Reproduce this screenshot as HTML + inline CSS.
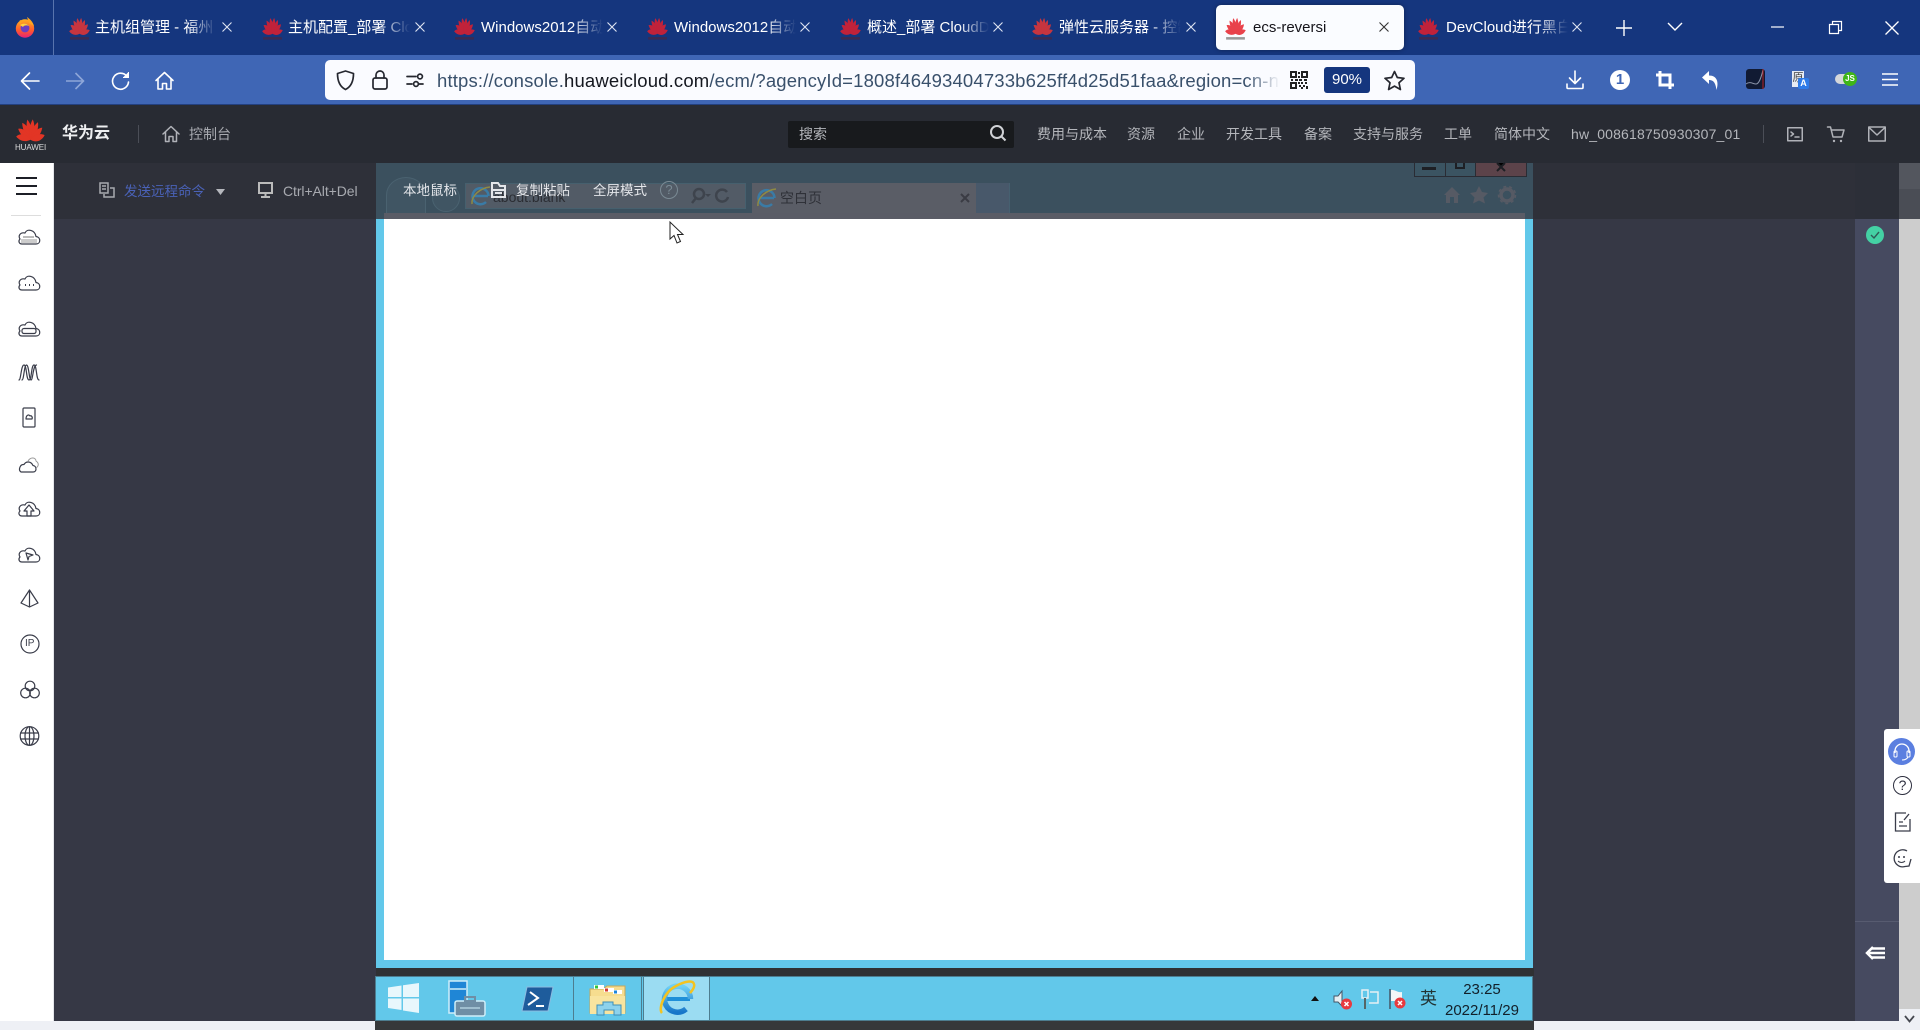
<!DOCTYPE html>
<html lang="zh"><head><meta charset="utf-8"><title>ecs-reversi</title>
<style>
*{box-sizing:border-box}
html,body{margin:0;padding:0;width:1920px;height:1030px;overflow:hidden;background:#eef0f5}
body{position:relative;font-family:"Liberation Sans","Noto Sans CJK SC",sans-serif}
.a{position:absolute}
.t{position:absolute;white-space:nowrap;line-height:1}
.tab{position:absolute;top:18px;color:#fff;font-size:15px;line-height:20px;white-space:nowrap;overflow:hidden;width:122px;-webkit-mask-image:linear-gradient(90deg,#000 75%,transparent 100%);mask-image:linear-gradient(90deg,#000 75%,transparent 100%)}
.nav{top:127px;font-size:14px;color:#b4b6bb}
svg{position:absolute;overflow:visible}
.wh{fill:none;stroke:#fff;stroke-width:1.6;stroke-linecap:round;stroke-linejoin:round}
.x{fill:none;stroke:#dfe5f2;stroke-width:1.1}
.gr{fill:none;stroke:#b0b2b8;stroke-width:1.5;stroke-linejoin:round;stroke-linecap:round}
.si{fill:none;stroke:#3a3d4a;stroke-width:1.2;stroke-linejoin:round;stroke-linecap:round}
.dk{fill:none;stroke:#25272f;stroke-width:1.7;stroke-linecap:round;stroke-linejoin:round}
</style></head><body>
<svg width="0" height="0" style="position:absolute"><defs>
<path id="p" d="M16 21C12.200 15 11.800 8 15 2C20 7 20 15 16 21Z"/>
<g id="hw">
<use href="#p" transform="rotate(-10 16 21)"/><use href="#p" transform="rotate(-32 16 21)"/><use href="#p" transform="rotate(-55 16 21)"/><use href="#p" transform="rotate(-78 16 21)"/>
<use href="#p" transform="rotate(12 16 21)"/><use href="#p" transform="rotate(34 16 21)"/><use href="#p" transform="rotate(57 16 21)"/><use href="#p" transform="rotate(80 16 21)"/>
</g>
<linearGradient id="ff" x1="0" y1="0" x2="0" y2="1"><stop offset="0" stop-color="#ffb020"/><stop offset=".6" stop-color="#ff5a2c"/><stop offset="1" stop-color="#e6207a"/></linearGradient>
<linearGradient id="ie" x1="0" y1="0" x2="0" y2="1"><stop offset="0" stop-color="#6fd0f5"/><stop offset="1" stop-color="#1776c9"/></linearGradient>
</defs></svg>

<!-- tab strip -->
<div class="a" style="left:0;top:0;width:1920px;height:55px;background:#15367e"></div>
<div class="a" style="left:53px;top:0;width:1px;height:55px;background:#5874ad"></div>
<svg style="left:14px;top:16px" width="22" height="22" viewBox="0 0 22 22"><circle cx="11" cy="12.500" r="9.200" fill="url(#ff)"/><path d="M6 4c-1 2-1 3 0 4l3-3zM13 1c3 2 6 5 7 9l-5-3z" fill="#ffa51f"/><circle cx="11" cy="12" r="4.400" fill="#6b3fc0"/><path d="M6 9c3-2 7-2 9 1-2-1-5-1-6 1z" fill="#ffd23a"/></svg>

<svg style="left:69px;top:16px" width="21" height="27" viewBox="-3 0 38 32" preserveAspectRatio="none" fill="#c7353f"><use href="#hw"/><rect x="-1" y="25" width="34" height="3" fill="#3b2a52"/></svg>
<svg style="left:262px;top:16px" width="21" height="27" viewBox="-3 0 38 32" preserveAspectRatio="none" fill="#c1223a"><use href="#hw"/><rect x="-1" y="25" width="34" height="3" fill="#3b2a52"/></svg>
<svg style="left:454px;top:16px" width="21" height="27" viewBox="-3 0 38 32" preserveAspectRatio="none" fill="#c1223a"><use href="#hw"/><rect x="-1" y="25" width="34" height="3" fill="#3b2a52"/></svg>
<svg style="left:647px;top:16px" width="21" height="27" viewBox="-3 0 38 32" preserveAspectRatio="none" fill="#c1223a"><use href="#hw"/><rect x="-1" y="25" width="34" height="3" fill="#3b2a52"/></svg>
<svg style="left:840px;top:16px" width="21" height="27" viewBox="-3 0 38 32" preserveAspectRatio="none" fill="#c1223a"><use href="#hw"/><rect x="-1" y="25" width="34" height="3" fill="#3b2a52"/></svg>
<svg style="left:1032px;top:16px" width="21" height="27" viewBox="-3 0 38 32" preserveAspectRatio="none" fill="#c7353f"><use href="#hw"/><rect x="-1" y="25" width="34" height="3" fill="#3b2a52"/></svg>
<svg style="left:1418px;top:16px" width="21" height="27" viewBox="-3 0 38 32" preserveAspectRatio="none" fill="#c1223a"><use href="#hw"/><rect x="-1" y="25" width="34" height="3" fill="#3b2a52"/></svg>

<div class="tab" style="left:95px">主机组管理 - 福州</div>
<div class="tab" style="left:288px">主机配置_部署 CloudDev</div>
<div class="tab" style="left:481px">Windows2012自动</div>
<div class="tab" style="left:674px">Windows2012自动</div>
<div class="tab" style="left:867px">概述_部署 CloudDev</div>
<div class="tab" style="left:1059px">弹性云服务器 - 控制台</div>
<div class="tab" style="left:1446px">DevCloud进行黑白</div>

<div class="a" style="left:1216px;top:5px;width:188px;height:45px;background:#fafcff;border-radius:5px;box-shadow:0 0 5px rgba(0,0,0,.35)"></div>
<svg style="left:1225px;top:16px" width="21" height="27" viewBox="-3 0 38 32" preserveAspectRatio="none" fill="#e9424b"><use href="#hw"/><rect x="-1" y="25" width="34" height="3" fill="#999"/></svg>
<div class="t" style="left:1253px;top:20px;font-size:15px;color:#15141a">ecs-reversi</div>

<svg style="left:222px;top:22px" width="10" height="10"><path d="M.5 .5L9.500 9.500M9.500 .5L.5 9.500" class="x"/></svg>
<svg style="left:415px;top:22px" width="10" height="10"><path d="M.5 .5L9.500 9.500M9.500 .5L.5 9.500" class="x"/></svg>
<svg style="left:607px;top:22px" width="10" height="10"><path d="M.5 .5L9.500 9.500M9.500 .5L.5 9.500" class="x"/></svg>
<svg style="left:800px;top:22px" width="10" height="10"><path d="M.5 .5L9.500 9.500M9.500 .5L.5 9.500" class="x"/></svg>
<svg style="left:993px;top:22px" width="10" height="10"><path d="M.5 .5L9.500 9.500M9.500 .5L.5 9.500" class="x"/></svg>
<svg style="left:1186px;top:22px" width="10" height="10"><path d="M.5 .5L9.500 9.500M9.500 .5L.5 9.500" class="x"/></svg>
<svg style="left:1379px;top:22px" width="10" height="10"><path d="M.5 .5L9.500 9.500M9.500 .5L.5 9.500" fill="none" stroke="#333" stroke-width="1.100"/></svg>
<svg style="left:1572px;top:22px" width="10" height="10"><path d="M.5 .5L9.500 9.500M9.500 .5L.5 9.500" class="x"/></svg>

<svg style="left:1616px;top:20px" width="16" height="16"><path d="M8 0V16M0 8H16" fill="none" stroke="#fff" stroke-width="1.400"/></svg>
<svg style="left:1667px;top:22px" width="16" height="10"><path d="M1 1L8 8L15 1" fill="none" stroke="#fff" stroke-width="1.400"/></svg>
<svg style="left:1771px;top:26px" width="13" height="2"><path d="M0 1H13" stroke="#fff" stroke-width="1.200"/></svg>
<svg style="left:1829px;top:21px" width="13" height="13"><path d="M.5 3.500H9.500V12.500H.5ZM3.500 3.500V.5H12.500V9.500H9.500" fill="none" stroke="#fff" stroke-width="1.200"/></svg>
<svg style="left:1885px;top:21px" width="14" height="14"><path d="M.5 .5L13.500 13.500M13.500 .5L.5 13.500" fill="none" stroke="#fff" stroke-width="1.300"/></svg>

<!-- nav bar -->
<div class="a" style="left:0;top:55px;width:1920px;height:50px;background:#3f66b5"></div>
<div class="a" style="left:0;top:104px;width:1920px;height:1px;background:#23407f"></div>
<svg style="left:20px;top:71px" width="20" height="20"><path d="M19 10H2M9.500 2L1.500 10L9.500 18" class="wh"/></svg>
<svg style="left:65px;top:71px" width="20" height="20"><path d="M1 10H18M10.500 2L18.500 10L10.500 18" fill="none" stroke="#8ea6d8" stroke-width="1.600"/></svg>
<svg style="left:111px;top:71px" width="19" height="20"><path d="M16 5.500A8 8 0 1 0 17.500 11" class="wh"/><path d="M17.500 1V6.500H12" fill="#fff" stroke="#fff" stroke-width="1"/></svg>
<svg style="left:155px;top:71px" width="19" height="20"><path d="M1 9.500L9.500 1.500L18 9.500M3 8V18H7.500V12.500H11.500V18H16V8" class="wh"/></svg>

<div class="a" style="left:325px;top:60px;width:1090px;height:40px;background:#fafbff;border-radius:5px"></div>
<svg style="left:336px;top:70px" width="19" height="21"><path d="M9.500 1L17.500 3.500C17.500 11 15.500 16.500 9.500 19.500C3.500 16.500 1.500 11 1.500 3.500Z" class="dk"/></svg>
<svg style="left:372px;top:70px" width="16" height="20"><rect x="1" y="8" width="14" height="11" rx="2" class="dk"/><path d="M4 8V5a4 4 0 0 1 8 0V8" class="dk"/></svg>
<svg style="left:406px;top:73px" width="18" height="15"><path d="M1 3.500H10M1 11H6" class="dk"/><circle cx="14" cy="3.500" r="2.400" class="dk"/><circle cx="10" cy="11" r="2.400" class="dk"/><path d="M13 11H17" class="dk"/></svg>
<div class="t" style="left:437px;top:70px;width:843px;overflow:hidden;font-size:18.500px;letter-spacing:.16px;line-height:21px;color:#1f2430;-webkit-mask-image:linear-gradient(90deg,#000 96%,transparent);mask-image:linear-gradient(90deg,#000 96%,transparent)"><span style="color:#39506b">https://console.</span><span style="color:#14171f">huaweicloud.com</span><span style="color:#39506b">/ecm/?agencyId=1808f46493404733b625ff4d25d51faa&amp;region=cn-north</span></div>
<svg style="left:1290px;top:71px" width="18" height="18" viewBox="0 0 18 18" fill="#222"><path d="M0 0h7v7H0zM2 2v3h3V2zM11 0h7v7h-7zM13 2v3h3V2zM0 11h7v7H0zM2 13v3h3v-3z" fill-rule="evenodd"/><path d="M8 1h2v2H8zM8 5h2v2H8zM1 8h2v2H1zM5 8h3v2H5zM9 8h3v2H9zM14 8h3v2h-3zM8 11h2v2H8zM11 11h2v2h-2zM15 11h2v2h-2zM9 14h2v2H9zM13 14h2v2h-2zM16 15h2v3h-2zM11 16h2v2h-2z"/></svg>
<div class="a" style="left:1324px;top:67px;width:46px;height:26px;background:#15367e;border-radius:3px;color:#fff;font-size:15px;line-height:26px;text-align:center">90%</div>
<svg style="left:1384px;top:70px" width="21" height="21"><path d="M10.500 1.500L13.300 7.500L20 8.300L15 12.800L16.400 19.500L10.500 16.100L4.600 19.500L6 12.800L1 8.300L7.700 7.500Z" class="dk"/></svg>

<svg style="left:1566px;top:70px" width="18" height="20"><path d="M9 1V13M3.500 8L9 13.500L14.500 8M1 14V17.500A1 1 0 0 0 2 18.500H16A1 1 0 0 0 17 17.500V14" class="wh"/></svg>
<div class="a" style="left:1610px;top:70px;width:20px;height:20px;border-radius:50%;background:#fff;color:#3f66b5;font:bold 15px/20px 'Liberation Sans',sans-serif;text-align:center">1</div>
<svg style="left:1656px;top:71px" width="18" height="18"><path d="M4 0V14H18M0 4H14V18" fill="none" stroke="#fff" stroke-width="3"/></svg>
<svg style="left:1701px;top:71px" width="18" height="20"><path d="M8 0L1 6.500L8 13V9C12 9 14.500 11 15.500 19C18 11 16 4.500 8 4.500Z" fill="#fff"/></svg>
<div class="a" style="left:1746px;top:69px;width:19px;height:20px;border-radius:3px;background:#111a33;overflow:hidden"></div>
<svg style="left:1746px;top:69px" width="19" height="20"><path d="M0 15C4 12 7 15 10 15S15 9 17 1" fill="none" stroke="#8a93a8" stroke-width="1"/><path d="M17 0V20" stroke="#d22" stroke-width=".8"/></svg>
<div class="a" style="left:1792px;top:71px;width:12px;height:16px;background:#e8ecf4;color:#444;font-size:11px;line-height:14px;text-align:center">原</div>
<div class="a" style="left:1798px;top:78px;width:11px;height:11px;border-radius:2px;background:#2f7be8;color:#fff;font:bold 9px/11px 'Liberation Sans',sans-serif;text-align:center">A</div>
<div class="a" style="left:1835px;top:74px;width:18px;height:10px;background:#d5d7da;border-radius:5px"></div>
<div class="a" style="left:1843px;top:72px;width:14px;height:14px;background:#3eb518;border-radius:50%;color:#fff;font:bold 8px/14px 'Liberation Sans',sans-serif;text-align:center">JS</div>
<svg style="left:1882px;top:73px" width="16" height="13"><path d="M0 1H16M0 6.500H16M0 12H16" stroke="#fff" stroke-width="1.400"/></svg>

<!-- huawei header -->
<div class="a" style="left:0;top:105px;width:1920px;height:58px;background:#282b33"></div>
<svg style="left:16px;top:117px" width="29" height="26" viewBox="-3 0 38 24" preserveAspectRatio="none" fill="#e23525"><use href="#hw"/></svg>
<div class="t" style="left:15px;top:144px;font-size:8px;color:#ddd;width:31px;text-align:center;letter-spacing:-.1px">HUAWEI</div>
<div class="t" style="left:62px;top:126px;font-size:16px;font-weight:bold;color:#eeeff1">华为云</div>
<div class="a" style="left:138px;top:125px;width:1px;height:18px;background:#4b4e57"></div>
<svg style="left:162px;top:125px" width="18" height="18"><path d="M1 9L9 1.500L17 9M3.500 7V16.500H7V11.500H11V16.500H14.500V7" class="gr"/></svg>
<div class="t" style="left:189px;top:127px;font-size:14px;color:#a8aab0">控制台</div>
<div class="a" style="left:788px;top:121px;width:226px;height:27px;background:#181a1d;border-radius:2px"></div>
<div class="t" style="left:799px;top:127px;font-size:14px;color:#b4b6bb">搜索</div>
<svg style="left:989px;top:124px" width="18" height="20"><circle cx="8" cy="8" r="6" fill="none" stroke="#d0d2d6" stroke-width="2"/><path d="M12.500 12.500L16.500 16.500" stroke="#d0d2d6" stroke-width="2"/></svg>
<div class="t nav" style="left:1037px">费用与成本</div>
<div class="t nav" style="left:1127px">资源</div>
<div class="t nav" style="left:1177px">企业</div>
<div class="t nav" style="left:1226px">开发工具</div>
<div class="t nav" style="left:1304px">备案</div>
<div class="t nav" style="left:1353px">支持与服务</div>
<div class="t nav" style="left:1444px">工单</div>
<div class="t nav" style="left:1494px">简体中文</div>
<div class="t nav" style="left:1571px;letter-spacing:.17px">hw_008618750930307_01</div>
<div class="a" style="left:1763px;top:125px;width:1px;height:18px;background:#4b4e57"></div>
<svg style="left:1787px;top:126px" width="16" height="16"><rect x=".75" y="1.750" width="14.500" height="13" class="gr"/><path d="M4 6L6.500 8L4 10M8 11H12" class="gr"/></svg>
<svg style="left:1827px;top:126px" width="18" height="17"><path d="M.5 1H3.500L6 11H15L17 4H4.500" class="gr"/><circle cx="7" cy="15" r="1.200" fill="#b0b2b8"/><circle cx="14" cy="15" r="1.200" fill="#b0b2b8"/></svg>
<svg style="left:1868px;top:126px" width="18" height="16"><rect x=".75" y="1" width="16.500" height="14" class="gr"/><path d="M1 1.500L9 9L17 1.500" class="gr"/></svg>

<!-- main -->
<div class="a" style="left:54px;top:163px;width:1845px;height:858px;background:#363845"></div>
<div class="a" style="left:1855px;top:163px;width:44px;height:858px;background:#464a60"></div>
<div class="a" style="left:1855px;top:921px;width:44px;height:1px;background:#575b70"></div>
<div class="a" style="left:1899px;top:163px;width:21px;height:846px;background:#cdcdcd"></div>
<!-- dimmed band (toolbar) -->
<div class="a" style="left:54px;top:163px;width:1801px;height:56px;background:#2e3039"></div>
<div class="a" style="left:1855px;top:163px;width:44px;height:56px;background:#2c2f38"></div>
<div class="a" style="left:1899px;top:163px;width:21px;height:26px;background:#53565e"></div>
<div class="a" style="left:1899px;top:189px;width:21px;height:30px;background:#4a4d55"></div>

<!-- remote screen -->
<div class="a" style="left:376px;top:219px;width:1157px;height:749px;background:#62c8ea"></div>
<div class="a" style="left:384px;top:219px;width:1141px;height:741px;background:#fff"></div>
<div class="a" style="left:376px;top:968px;width:1158px;height:8px;background:#2f3133"></div>
<div class="a" style="left:375px;top:976px;width:1158px;height:45px;background:#62c8ea;border:1px solid #4d7d8f"></div>
<div class="a" style="left:375px;top:1021px;width:1159px;height:9px;background:#36383a"></div>

<!-- dimmed remote IE chrome -->
<div class="a" style="left:376px;top:163px;width:1157px;height:56px;background:#3b505e"></div>
<div class="a" style="left:384px;top:213px;width:1141px;height:6px;background:#5a5c66"></div>
<div class="a" style="left:386px;top:177px;width:40px;height:36px;border-radius:50% 50% 0 0;border:1px solid #4a6270;border-bottom:none;background:#405563"></div>
<div class="a" style="left:432px;top:184px;width:28px;height:28px;border-radius:50%;border:1px solid #4a6270;background:#405563"></div>
<div class="a" style="left:465px;top:183px;width:281px;height:26px;background:#525b66;border:1px solid #46606e"></div>
<div class="t" style="left:493px;top:190px;font-size:14px;color:#2b2d33">about:blank</div>
<div class="a" style="left:752px;top:183px;width:224px;height:30px;background:#5a5d66"></div>
<div class="a" style="left:976px;top:183px;width:34px;height:30px;background:#48586a;border-right:1px solid #466070"></div>
<div class="t" style="left:780px;top:191px;font-size:14px;color:#2f3138">空白页</div>
<svg style="left:960px;top:193px" width="10" height="10"><path d="M1 1L9 9M9 1L1 9" stroke="#3a3c44" stroke-width="2"/></svg>
<div class="a" style="left:1414px;top:163px;width:32px;height:14px;background:#3b5462;border:1px solid #2a2c34;border-top:none"></div>
<div class="a" style="left:1445px;top:163px;width:31px;height:14px;background:#3b5462;border:1px solid #2a2c34;border-top:none"></div>
<div class="a" style="left:1475px;top:163px;width:52px;height:14px;background:#5c434a;border:1px solid #2a2c34;border-top:none"></div>
<div class="a" style="left:1422px;top:167px;width:14px;height:3px;background:#1d1f24"></div>
<div class="a" style="left:1455px;top:163px;width:10px;height:6px;border:2px solid #1d1f24;border-top:none"></div>
<svg style="left:1496px;top:163px" width="10" height="8"><path d="M1 0L5 4L9 0M5 4L1 8M5 4L9 8" stroke="#1d1f24" stroke-width="2"/></svg>
<svg style="left:1444px;top:186px" width="74" height="18" fill="#565a64"><path d="M8 1L16 9H14V17H10V11H6V17H2V9H0Z"/><path d="M35 0L38 6L44 7L39.500 11.500L41 17.500L35 14.500L29 17.500L30.500 11.500L26 7L32 6Z"/><circle cx="63" cy="9" r="6" fill="none" stroke="#565a64" stroke-width="3.500"/><circle cx="63" cy="9" r="8.500" fill="none" stroke="#565a64" stroke-width="1.500" stroke-dasharray="3 3"/></svg>
<svg style="left:691px;top:187px" width="40" height="18"><circle cx="8" cy="7" r="5" fill="none" stroke="#3e444d" stroke-width="2.500"/><path d="M5 11L1 16" stroke="#3e444d" stroke-width="2.500"/><path d="M14 7H20L17 10Z" fill="#3e444d"/><path d="M36 5A6 6 0 1 0 37 10" fill="none" stroke="#3e444d" stroke-width="2.500"/></svg>
<svg style="left:470px;top:184px" width="24" height="24"><path d="M18 12H4M18.500 12A8 8 0 1 0 16 18" fill="none" stroke="#3a7ba6" stroke-width="2.500"/><path d="M2 20C1 12 10 4 20 3" fill="none" stroke="#8f8a44" stroke-width="1.500"/></svg>
<svg style="left:756px;top:186px" width="24" height="24"><path d="M18 12H4M18.500 12A8 8 0 1 0 16 18" fill="none" stroke="#3a7ba6" stroke-width="2.500"/><path d="M2 20C1 12 10 4 20 3" fill="none" stroke="#8f8a44" stroke-width="1.500"/></svg>

<!-- toolbar text -->
<svg style="left:99px;top:182px" width="16" height="17"><path d="M1 1H9V11H1ZM3 4H7M3 7H7M11 6H15V15H5V12" fill="none" stroke="#a8aab0" stroke-width="1.500"/></svg>
<div class="t" style="left:124px;top:185px;font-size:13.500px;color:#4a62b8">发送远程命令</div>
<svg style="left:216px;top:189px" width="9" height="6"><path d="M0 0H9L4.500 6Z" fill="#b5b7bd"/></svg>
<svg style="left:258px;top:182px" width="15" height="16"><rect x="1" y="1" width="13" height="10" fill="none" stroke="#bbb" stroke-width="2"/><path d="M7.500 11V14M3 15H12" stroke="#bbb" stroke-width="2"/></svg>
<div class="t" style="left:283px;top:184px;font-size:14px;letter-spacing:-.08px;color:#a8aab0">Ctrl+Alt+Del</div>
<div class="t" style="left:403px;top:184px;font-size:13.500px;color:#e4e6ea">本地鼠标</div>
<svg style="left:491px;top:182px" width="15" height="16"><path d="M1 1H7L9 4H14V15H1ZM1 8H14M4 11H11" fill="none" stroke="#e4e6ea" stroke-width="2"/></svg>
<div class="t" style="left:516px;top:184px;font-size:13.500px;color:#e4e6ea">复制粘贴</div>
<div class="t" style="left:593px;top:184px;font-size:13.500px;color:#e4e6ea">全屏模式</div>
<div class="a" style="left:660px;top:181px;width:18px;height:18px;border:1.500px solid #7a8a94;border-radius:50%;color:#7a8a94;font-size:13px;line-height:15px;text-align:center">?</div>

<svg style="left:669px;top:221px" width="16" height="25"><path d="M1 1V18L5 14.500L8 22L11.500 20.500L8.500 13.500H14Z" fill="#fff" stroke="#222" stroke-width="1"/></svg>

<!-- green check -->
<div class="a" style="left:1866px;top:226px;width:18px;height:18px;border-radius:50%;background:#44d1a4"></div>
<svg style="left:1870px;top:231px" width="10" height="8"><path d="M1 4L4 7L9 1" fill="none" stroke="#2f5a56" stroke-width="1.400"/></svg>

<!-- sidebar -->
<div class="a" style="left:0;top:163px;width:54px;height:858px;background:#fff;border-right:1px solid #e4e6ea"></div>
<svg style="left:16px;top:177px" width="21" height="18"><path d="M0 1H21M0 9H21M0 17H21" stroke="#1c1e26" stroke-width="2"/></svg>
<div class="a" style="left:11px;top:215px;width:30px;height:1px;background:#ddd"></div>
<svg style="left:17px;top:228px" width="24" height="18"><path class="si" d="M5 16H19C24 16 24 9 19 8.500C18 2 10 0 8 5C3 4 1 8 3 11C1 13 2 16 5 16Z"/><path d="M4 11H20V15H4Z" fill="#ccc"/><path d="M6 9H17" stroke="#777"/></svg>
<svg style="left:17px;top:274px" width="24" height="18"><path class="si" d="M5 16H19C24 16 24 9 19 8.500C18 2 10 0 8 5C3 4 1 8 3 11C1 13 2 16 5 16Z"/><path d="M8 11H9M12 11H13M16 11H17" stroke="#3a3d4a" stroke-width="2"/></svg>
<svg style="left:17px;top:320px" width="24" height="18"><path class="si" d="M5 16H19C24 16 24 9 19 8.500C18 2 10 0 8 5C3 4 1 8 3 11C1 13 2 16 5 16Z"/><rect x="5" y="8.500" width="14" height="5" rx="2" class="si"/></svg>
<svg style="left:18px;top:364px" width="22" height="17"><path class="si" d="M1 16C3 16 3 1 6 1S8 16 11 16S13 1 16 1S18 16 21 16"/><path class="si" d="M4 16C6 16 6 1 8.500 1S11 16 13 16 15 1 18.500 1"/></svg>
<svg style="left:22px;top:407px" width="14" height="21"><rect x="1" y="1" width="12" height="19" rx="1" class="si"/><path class="si" stroke-width=".8" d="M4 12H10C11 10 9 8 8 9C7 7 4 8 4 12Z"/></svg>
<svg style="left:17px;top:456px" width="24" height="18"><path class="si" d="M4 16H16C20 16 20 10 16 9.500C14 5 9 5 7 8.500C3 8 1 14 4 16Z"/><path d="M11 5C14 0 19 2 19 5C22 7 22 10 19 12" fill="none" stroke="#999" stroke-width="1"/></svg>
<svg style="left:17px;top:500px" width="24" height="18"><path class="si" d="M5 16H19C24 16 24 9 19 8.500C18 2 10 0 8 5C3 4 1 8 3 11C1 13 2 16 5 16Z"/><path class="si" d="M12 5L7 11H10V16H14V11H17Z"/></svg>
<svg style="left:17px;top:546px" width="24" height="18"><path class="si" d="M5 16H19C24 16 24 9 19 8.500C18 2 10 0 8 5C3 4 1 8 3 11C1 13 2 16 5 16Z"/><path class="si" d="M9 7L16 9L12 10.500L11 14Z"/></svg>
<svg style="left:20px;top:589px" width="19" height="20"><path class="si" d="M9.500 1V18M9.500 1L18 14L9.500 18L1 14Z"/></svg>
<svg style="left:20px;top:634px" width="20" height="20"><circle cx="10" cy="10" r="9" class="si"/></svg>
<div class="t" style="left:25px;top:639px;font-size:10px;color:#3a3d4a">IP</div>
<svg style="left:20px;top:680px" width="20" height="19"><circle cx="10" cy="6" r="4.800" class="si"/><circle cx="5.500" cy="13" r="4.800" class="si"/><circle cx="14.500" cy="13" r="4.800" class="si"/></svg>
<svg style="left:19px;top:726px" width="21" height="20"><circle cx="10.500" cy="10" r="9.300" class="si"/><ellipse cx="10.500" cy="10" rx="4.500" ry="9.300" class="si"/><path class="si" d="M1.500 7H19.500M1.500 13H19.500M10.500 1V19"/></svg>

<!-- taskbar -->
<svg style="left:388px;top:983px" width="31" height="30" viewBox="0 0 31 30" fill="#e8f7fc"><path d="M0 4.500L13.500 2.500V14H0zM15 2.300L31 0V14H15zM0 15.500H13.500V27L0 25zM15 15.500H31V30L15 27.500z"/></svg>
<svg style="left:448px;top:980px" width="38" height="37"><rect x="1" y="1" width="18" height="32" fill="#1f86d6" stroke="#cfeef9" stroke-width="1.500"/><path d="M2 9H18" stroke="#cfeef9" stroke-width="1.500"/><rect x="7" y="21" width="30" height="15" rx="2" fill="#6f8ea5" stroke="#cfeef9" stroke-width="1.500"/><path d="M12 28H32" stroke="#cfeef9"/><rect x="17" y="17" width="10" height="4" fill="none" stroke="#6f8ea5" stroke-width="2"/></svg>
<svg style="left:521px;top:986px" width="33" height="26"><path d="M6 1H32L27 25H1Z" fill="#1e5c9c" stroke="#8cbbe0"/><path d="M9 6L17 12L7 19M15 20H23" fill="none" stroke="#fff" stroke-width="2"/></svg>
<div class="a" style="left:573px;top:977px;width:1px;height:43px;background:#4d7d8f"></div>
<div class="a" style="left:641px;top:977px;width:1px;height:43px;background:#4d7d8f"></div>
<div class="a" style="left:643px;top:977px;width:67px;height:43px;background:#9bdcf2;border-left:1px solid #4d7d8f;border-right:1px solid #4d7d8f"></div>
<svg style="left:589px;top:984px" width="37" height="33"><path d="M1 5H14L18 2H36V29H1Z" fill="#f6dd8f" stroke="#c9a755"/><path d="M1 12H36V30H1Z" fill="#f8e49f"/><rect x="5" y="1" width="10" height="4" fill="#fff"/><rect x="6" y="1.500" width="3" height="3" fill="#31c23c"/><rect x="15" y="4" width="10" height="4" fill="#fff"/><rect x="16" y="4.500" width="3" height="3" fill="#d43b32"/><rect x="24" y="6" width="9" height="4" fill="#fff"/><rect x="25" y="6.500" width="3" height="3" fill="#1c86dd"/><path d="M8 31V21H14V18H24V21H32V31H25V26H15V31Z" fill="#8dd2ec" stroke="#3e90b8"/></svg>
<svg style="left:659px;top:980px" width="37" height="36"><path d="M31 19H8" stroke="#1f8fd8" stroke-width="4" fill="none"/><path d="M31.500 19A13 13 0 1 0 27 29" fill="none" stroke="url(#ie)" stroke-width="5.500"/><path d="M3 33C-1 29 5 12 17 6C26 1 34 0 35 4C36 7 33 11 31 13" fill="none" stroke="#f4c320" stroke-width="2.500"/></svg>

<svg style="left:1311px;top:996px" width="8" height="5"><path d="M0 5L4 0L8 5Z" fill="#111"/></svg>
<svg style="left:1333px;top:989px" width="20" height="22"><path d="M1 7H5L9 2V17L5 13H1Z" fill="#e6eff3" stroke="#456"/><circle cx="13.500" cy="15" r="5.500" fill="#e63a3f"/><path d="M11.500 13L15.500 17M15.500 13L11.500 17" stroke="#fff" stroke-width="1.500"/></svg>
<svg style="left:1361px;top:989px" width="18" height="21"><path d="M1 1H7V9H1ZM9 3H17V14H8" fill="none" stroke="#e6eff3" stroke-width="1.500"/><path d="M4 9V20" stroke="#566" stroke-width="2"/></svg>
<svg style="left:1388px;top:988px" width="18" height="22"><path d="M2 1V21" stroke="#456" stroke-width="1.500"/><path d="M3 2C6 1 10 5 14 4V13H3Z" fill="#f2f6f8"/><circle cx="12" cy="15" r="5.500" fill="#e63a3f"/><path d="M10 13L14 17M14 13L10 17" stroke="#fff" stroke-width="1.500"/></svg>
<div class="t" style="left:1420px;top:990px;font-size:17px;color:#233">英</div>
<div class="t" style="left:1446px;top:982px;width:72px;text-align:center;font-size:15px;color:#12202a">23:25</div>
<div class="t" style="left:1445px;top:1003px;font-size:15px;color:#12202a">2022/11/29</div>

<!-- right floating -->
<div class="a" style="left:1884px;top:729px;width:36px;height:154px;background:#fff;border-radius:3px 0 0 3px"></div>
<div class="a" style="left:1888px;top:738px;width:27px;height:27px;background:#5b7fe0;border-radius:50%"></div>
<svg style="left:1893px;top:743px" width="18" height="18"><path d="M2 10V8a7 7 0 0 1 14 0V10" fill="none" stroke="#fff" stroke-width="1.300"/><rect x="1" y="8" width="3" height="6" rx="1" fill="none" stroke="#fff"/><rect x="14" y="8" width="3" height="6" rx="1" fill="none" stroke="#fff"/><path d="M15 14C14 16 12 17 9 17" fill="none" stroke="#fff"/></svg>
<div class="a" style="left:1893px;top:776px;width:19px;height:19px;border:1.400px solid #2e3040;border-radius:50%;color:#2e3040;font-size:14px;line-height:17px;text-align:center">?</div>
<svg style="left:1894px;top:812px" width="18" height="20"><path d="M12 1H1.500V19H16V7M15 2L10 8" fill="none" stroke="#3a3d4a" stroke-width="1.300"/><path d="M5 10H9M5 14H13" stroke="#3a3d4a" stroke-width="1.300"/></svg>
<svg style="left:1892px;top:849px" width="21" height="19"><path d="M15 2A8.500 8.500 0 1 0 13 17.500L17 17L19 10" fill="none" stroke="#3a3d4a" stroke-width="1.300"/><circle cx="7" cy="8" r="1" fill="#3a3d4a"/><circle cx="12" cy="8" r="1" fill="#3a3d4a"/><path d="M6 12C8 14 11 14 13 12" fill="none" stroke="#3a3d4a"/></svg>
<svg style="left:1866px;top:946px" width="20" height="14"><path d="M7 1L1 7L7 13" fill="none" stroke="#fff" stroke-width="2.500"/><path d="M6 2.500H19M3 7H19M6 11.500H19" stroke="#fff" stroke-width="2.500"/></svg>
<svg style="left:1904px;top:1015px" width="11" height="8"><path d="M1 1L5.500 6.500L10 1" fill="none" stroke="#454850" stroke-width="1.800"/></svg>
</body></html>
